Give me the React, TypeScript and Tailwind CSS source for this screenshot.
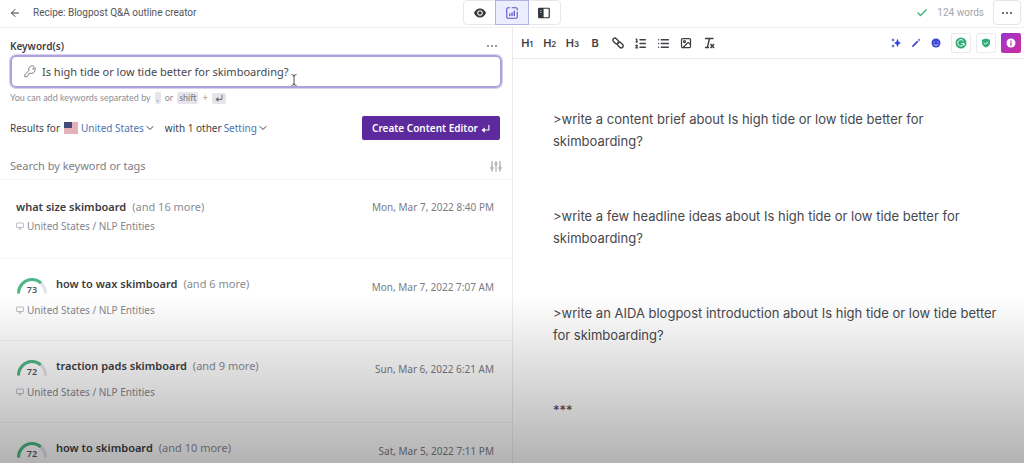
import { useState } from 'react';
import {
  ArrowLeft,
  Check,
  ChevronDown,
  Image,
  List,
  ListOrdered,
} from 'lucide-react';
import { clsx } from 'clsx';

interface Result {
  id: number;
  title: string;
  more: number;
  date: string;
  score?: number;
  source?: string;
}

const results: Result[] = [
  { id: 1, title: 'what size skimboard', more: 16, date: 'Mon, Mar 7, 2022 8:40 PM', source: 'United States / NLP Entities' },
  { id: 2, title: 'how to wax skimboard', more: 6, date: 'Mon, Mar 7, 2022 7:07 AM', score: 73, source: 'United States / NLP Entities' },
  { id: 3, title: 'traction pads skimboard', more: 9, date: 'Sun, Mar 6, 2022 6:21 AM', score: 72, source: 'United States / NLP Entities' },
  { id: 4, title: 'how to skimboard', more: 10, date: 'Sat, Mar 5, 2022 7:11 PM', score: 72 },
];

const paragraphs = [
  '>write a content brief about Is high tide or low tide better for skimboarding?',
  '>write a few headline ideas about Is high tide or low tide better for skimboarding?',
  '>write an AIDA blogpost introduction about Is high tide or low tide better for skimboarding?',
  '***',
];

function EyeIcon() {
  return (
    <svg className="w-3 h-3" viewBox="0 0 24 24" fill="none">
      <path d="M12 3C6.500 3 2 7 0 12c2 5 6.500 9 12 9s10-4 12-9c-2-5-6.500-9-12-9z" fill="currentColor" />
      <circle cx="12" cy="12" r="5.500" fill="white" />
      <circle cx="12" cy="12" r="3.500" fill="currentColor" />
    </svg>
  );
}

function ChartIcon() {
  return (
    <svg className="w-3 h-3" viewBox="0 0 24 24" fill="none" stroke="currentColor" strokeWidth="2.200" strokeLinecap="round">
      <path d="M7 1.500H4A2.500 2.500 0 0 0 1.500 4v16A2.500 2.500 0 0 0 4 22.500h16a2.500 2.500 0 0 0 2.500-2.500V10M12 1.500h8A2.500 2.500 0 0 1 22.500 4v2" />
      <path d="M7.500 17v-3M12 17v-5M16.500 17V8.500" strokeWidth="2.600" />
    </svg>
  );
}

function PanelIcon() {
  return (
    <svg className="w-3 h-3" viewBox="0 0 24 24" fill="none" stroke="currentColor" strokeWidth="2.400">
      <rect x="1.500" y="2.500" width="21" height="19" rx="1.500" />
      <path d="M2 3h8v18H2z" fill="currentColor" />
      <path d="M4 7h3M4 11h3" stroke="white" strokeWidth="1.200" />
    </svg>
  );
}

function KeyIcon() {
  return (
    <svg className="w-[13px] h-[13px] shrink-0 text-[#77777f]" viewBox="0 0 24 24" fill="none" stroke="currentColor" strokeWidth="1.800" strokeLinejoin="round">
      <path d="M15.500 1.500a7 7 0 0 0-6.700 9L1.500 18v3.500h3.800l2.300-2.100v-1.700l3.700-2.700A7 7 0 1 0 15.500 1.500z" />
      <circle cx="17" cy="7" r="1" />
    </svg>
  );
}

function ReturnIcon({ className }: { className: string }) {
  return (
    <svg className={className} viewBox="0 0 20 20" fill="none" stroke="currentColor" strokeWidth="2.400">
      <path d="M17.500 2v11.500H6" />
      <path d="M8.500 7.500L1 13.500l7.500 6z" fill="currentColor" stroke="none" />
    </svg>
  );
}

function FlagIcon() {
  return (
    <svg className="w-[14px] h-3" viewBox="0 0 14 12">
      <path d="M0 0h14v12H0z" fill="#f1dfe3" />
      <path d="M0 1h14M0 3h14M0 5h14M0 7h14M0 9h14M0 11h14" stroke="#d8818f" />
      <path d="M0 0h8v6H0z" fill="#414a78" />
    </svg>
  );
}

function LinkIcon() {
  return (
    <svg className="w-3 h-3" viewBox="0 0 24 24" fill="none" stroke="currentColor" strokeWidth="2.800">
      <rect x="1" y="4" width="13" height="8" rx="4" transform="rotate(45 7.500 8)" />
      <rect x="10" y="12" width="13" height="8" rx="4" transform="rotate(45 16.500 16)" />
    </svg>
  );
}

function ClearFormatIcon() {
  return (
    <svg className="w-3 h-3" viewBox="0 0 24 24" fill="none" stroke="currentColor" strokeWidth="2.800">
      <path d="M4 3h17M13 3L9 20M4 21h8" />
      <path d="M15 14l7 8M22 14l-7 8" strokeWidth="3.200" />
    </svg>
  );
}

function FilterIcon() {
  return (
    <svg className="w-3 h-3" viewBox="0 0 24 24" fill="none" stroke="currentColor" strokeWidth="2">
      <path d="M4 2v12M4 18v5M12 2v3M12 10v13M20 2v12M20 18v5" />
      <circle cx="4" cy="16" r="2.200" />
      <circle cx="12" cy="7.500" r="2.200" />
      <circle cx="20" cy="16" r="2.200" />
    </svg>
  );
}

function SparkleIcon() {
  return (
    <svg className="w-[10px] h-[10px]" viewBox="0 0 20 20" fill="currentColor">
      <path d="M13 1.500l2.500 6 4.500 2.500-4.500 2.500-2.500 6-2.500-6L6 10l4.500-2.500z" />
      <path d="M4 0l1.200 3L8 4 5.200 5.200 4 8 2.800 5.200 0 4l2.800-1zM4 12l1.200 3L8 16l-2.800 1.200L4 20l-1.200-2.800L0 16l2.800-1z" />
    </svg>
  );
}

function PencilIcon() {
  return (
    <svg className="w-[10px] h-[10px]" viewBox="0 0 20 20" fill="currentColor">
      <path d="M3 14.500L12.500 5l2.500 2.500L5.500 17 1.500 18.500zM14 3.500L16 1.500 18.500 4l-2 2z" />
    </svg>
  );
}

function SmileIcon() {
  return (
    <svg className="w-[10px] h-[10px]" viewBox="0 0 20 20">
      <circle cx="10" cy="10" r="9" fill="currentColor" />
      <path d="M5.500 8h2M12.500 8h2M5 12c2 3.500 8 3.500 10 0" stroke="white" strokeWidth="1.500" fill="none" />
    </svg>
  );
}

function GrammarIcon() {
  return (
    <svg className="w-3 h-3" viewBox="0 0 24 24" fill="none">
      <circle cx="12" cy="12" r="11" fill="#2fae78" />
      <path d="M17 8a6.300 6.300 0 1 0 1 5h-5M18 13v4" stroke="white" strokeWidth="2" />
    </svg>
  );
}

function ShieldIcon() {
  return (
    <svg className="w-[10px] h-[10px]" viewBox="0 0 20 20" fill="none">
      <path d="M10 1l8 2.500V10c0 4.500-3.500 7.500-8 9-4.500-1.500-8-4.500-8-9V3.500z" fill="#2fae78" />
      <path d="M6 9.500l3 3 5-5" stroke="white" strokeWidth="2" />
    </svg>
  );
}

function InfoIcon() {
  return (
    <svg className="w-[10px] h-[10px]" viewBox="0 0 20 20">
      <circle cx="10" cy="10" r="9" fill="white" />
      <path d="M10 9v6M10 5v2.500" stroke="#b62db5" strokeWidth="2.600" />
    </svg>
  );
}

function Dots({ className }: { className?: string }) {
  return (
    <svg className={clsx('w-3 h-1', className)} viewBox="0 0 12 4" fill="currentColor">
      <circle cx="2" cy="2" r="1" />
      <circle cx="6" cy="2" r="1" />
      <circle cx="10" cy="2" r="1" />
    </svg>
  );
}

function Gauge({ score }: { score: number }) {
  return (
    <div className="relative w-8 h-[18px] shrink-0">
      <svg className="w-8 h-[18px]" viewBox="0 0 32 18" fill="none" strokeWidth="3">
        <path d="M2.500 17.500a13.500 14 0 0 1 27 0" stroke="#e4e2e8" pathLength="100" />
        <path d="M2.500 17.500a13.500 14 0 0 1 27 0" stroke="#4db886" pathLength="100" strokeDasharray={`${score} 100`} />
      </svg>
      <span className="absolute inset-x-0 top-2 text-center text-[9px] leading-3 font-semibold text-[#55555b]">{score}</span>
    </div>
  );
}

function ResultRow({ result }: { result: Result }) {
  const scored = result.score !== undefined;

  return (
    <li className={clsx('border-t border-[#f5f5f7] pl-4 pr-[18px]', scored ? 'h-[82px] pt-[17px]' : 'h-[79px] pt-[19px]')}>
      <div className="flex items-start">
        {result.score !== undefined && (
          <div className="mr-2">
            <Gauge score={result.score} />
          </div>
        )}
        <h3 className="text-[11px] leading-4 font-semibold text-[#3c3c42]">{result.title}</h3>
        <span className="ml-[6px] text-[11px] leading-4 text-[#8b8b92]">(and {result.more} more)</span>
        <time className={clsx('ml-auto text-[10px] leading-4 text-[#7c7c83]', scored && 'pt-[3px]')}>{result.date}</time>
      </div>
      {result.source && (
        <p className={clsx('flex items-center gap-[3px] text-[10px] leading-4 text-[#85858c]', scored ? 'mt-[7px]' : 'mt-[3px]')}>
          <svg className="w-2 h-2" viewBox="0 0 16 16" fill="none" stroke="#a9a9b0" strokeWidth="1.500">
            <rect x="1" y="2" width="14" height="9" rx="1" />
            <path d="M5 14h6M8 11v3" />
          </svg>
          {result.source}
        </p>
      )}
    </li>
  );
}

export default function App() {
  const [view, setView] = useState('content');
  const [keywords, setKeywords] = useState('Is high tide or low tide better for skimboarding?');

  const views = [
    { id: 'preview', label: 'Preview', icon: <EyeIcon /> },
    { id: 'content', label: 'Content score', icon: <ChartIcon /> },
    { id: 'split', label: 'Side panel', icon: <PanelIcon /> },
  ];

  const formatTools = [
    { label: 'Heading 1', icon: <span>H<small className="text-[8px]">1</small></span> },
    { label: 'Heading 2', icon: <span>H<small className="text-[8px]">2</small></span> },
    { label: 'Heading 3', icon: <span>H<small className="text-[8px]">3</small></span> },
    { label: 'Bold', icon: <span>B</span> },
    { label: 'Link', icon: <LinkIcon /> },
    { label: 'Ordered list', icon: <ListOrdered className="w-[13px] h-[13px]" strokeWidth={2.5} /> },
    { label: 'Bullet list', icon: <List className="w-[13px] h-[13px]" strokeWidth={2.5} /> },
    { label: 'Image', icon: <Image className="w-3 h-3" strokeWidth={2.5} /> },
    { label: 'Clear formatting', icon: <ClearFormatIcon /> },
  ];

  return (
    <div className="relative h-screen flex flex-col overflow-hidden bg-white font-['Noto_Sans',sans-serif] text-[#3f3f46]">
      {/* Top bar */}
      <header className="h-7 shrink-0 grid grid-cols-[1fr_auto_1fr] items-start border-b border-[#efeff1]">
        <div className="h-[25px] flex items-center gap-3 pl-[9px]">
          <a href="#recipes" aria-label="Back">
            <ArrowLeft className="w-3 h-3" />
          </a>
          <h1 className="font-['Roboto',sans-serif] text-[10px] text-[#55555c]">Recipe: Blogpost Q&amp;A outline creator</h1>
        </div>
        <div className="flex h-[25px] rounded border border-[#e8e8ec]">
          {views.map((item) => (
            <button
              key={item.id}
              type="button"
              aria-label={item.label}
              onClick={() => setView(item.id)}
              className={clsx(
                'w-8 flex items-center justify-center',
                view === item.id ? 'bg-[#edeefd] text-[#5a52c8] outline outline-[#b0b2ea]' : 'text-[#34343b]',
              )}
            >
              {item.icon}
            </button>
          ))}
        </div>
        <div className="h-[25px] flex items-center justify-end gap-[9px] pr-[3px]">
          <Check className="w-3 h-3 text-[#3fb57f]" strokeWidth={3} />
          <span className="font-['Roboto',sans-serif] text-[10px] text-[#a5a5ac]">124 words</span>
          <button type="button" aria-label="More options" className="w-7 h-[25px] flex items-center justify-center rounded border border-[#e4e4e9]">
            <Dots />
          </button>
        </div>
      </header>

      <main className="flex-1 min-h-0 grid grid-cols-2">
        {/* Keyword research */}
        <section className="min-w-0">
          <div className="px-[10px] pt-[10px]">
            <div className="flex items-center justify-between mb-px">
              <label htmlFor="keywords" className="text-[10px] leading-4 font-semibold">Keyword(s)</label>
              <button type="button" aria-label="Keyword options" className="pr-1">
                <Dots className="text-[#77777e]" />
              </button>
            </div>
            <div className="relative h-[33px] flex items-center gap-[5px] rounded-md border-2 border-[#afa1dc] pl-3 shadow-[0_0_0_1px_#d9d2ef]">
              <KeyIcon />
              <input
                id="keywords"
                type="text"
                value={keywords}
                onChange={(e) => setKeywords(e.target.value)}
                className="flex-1 min-w-0 bg-transparent text-[11px] leading-4 text-[#46464d] outline-none"
              />
              {/* Text cursor */}
              <svg className="absolute left-[279px] top-[17px] w-[6px] h-3" viewBox="0 0 6 12" fill="none" stroke="#55555b">
                <path d="M0.500 0.500Q3 0.500 3 2.500Q3 0.500 5.500 0.500M3 2v8M0.500 11.500Q3 11.500 3 9.500Q3 11.500 5.500 11.500" />
              </svg>
            </div>
            <p className="mt-1 flex items-center gap-1 font-['Lato',sans-serif] text-[9px] leading-3 text-[#8e8e95]">
              You can add keywords separated by
              <kbd className="px-[2px] rounded-xs bg-[#e6e5ec] font-['Lato',sans-serif]">,</kbd>
              or
              <kbd className="px-[2px] rounded-xs bg-[#e6e5ec] font-['Lato',sans-serif] text-[#77777e]">shift</kbd>
              +
              <kbd className="h-[11px] px-[3px] flex items-center rounded-xs bg-[#e6e5ec] text-[#66666d]">
                <ReturnIcon className="w-2 h-2" />
              </kbd>
            </p>
            <div className="mt-3 flex items-center text-[10px] leading-4">
              <span className="mr-1">Results for</span>
              <FlagIcon />
              <label className="ml-[3px] flex items-center text-[#4d74b5]">
                <select aria-label="Country" className="appearance-none field-sizing-content bg-transparent outline-none">
                  <option>United States</option>
                </select>
                <ChevronDown className="w-3 h-3 text-[#3f3f46]" />
              </label>
              <span className="ml-[9px] mr-[2px]">with 1 other</span>
              <label className="flex items-center text-[#4d74b5]">
                <select aria-label="Setting" className="appearance-none field-sizing-content bg-transparent outline-none">
                  <option>Setting</option>
                </select>
                <ChevronDown className="w-3 h-3 text-[#3f3f46]" />
              </label>
              <button type="button" className="ml-auto mr-[2px] w-[138px] h-6 flex items-center justify-center gap-[3px] rounded-xs bg-[#5c2a9d] text-[10px] font-semibold text-white">
                Create Content Editor
                <ReturnIcon className="w-[9px] h-[9px]" />
              </button>
            </div>
          </div>

          <div className="mt-[13px] h-[26px] flex items-center justify-between px-[10px]">
            <input
              type="search"
              aria-label="Search by keyword or tags"
              placeholder="Search by keyword or tags"
              className="flex-1 min-w-0 bg-transparent text-[11px] leading-4 placeholder:text-[#7d7d84] outline-none"
            />
            <button type="button" aria-label="Filter results" className="text-[#97979e]">
              <FilterIcon />
            </button>
          </div>

          <ul>
            {results.map((result) => (
              <ResultRow key={result.id} result={result} />
            ))}
          </ul>
        </section>

        {/* Editor */}
        <section className="min-w-0 border-l border-[#ebebee]">
          <div className="h-[31px] flex items-center justify-between border-b border-[#ebebed] px-[3px]">
            <div className="w-[204px] flex justify-between">
              {formatTools.map((tool) => (
                <button
                  key={tool.label}
                  type="button"
                  aria-label={tool.label}
                  className="w-[22px] h-5 flex items-center justify-center font-['Inter',sans-serif] text-[11px] font-semibold"
                >
                  {tool.icon}
                </button>
              ))}
            </div>
            <div className="flex items-center gap-[5px]">
              <div className="mr-[5px] flex items-center gap-[10px] text-[#3a46d6]">
                <button type="button" aria-label="Compose"><SparkleIcon /></button>
                <button type="button" aria-label="Edit"><PencilIcon /></button>
                <button type="button" aria-label="Tone"><SmileIcon /></button>
              </div>
              <button type="button" aria-label="Grammar check" className="w-5 h-5 flex items-center justify-center rounded-xs border border-[#ebebef]"><GrammarIcon /></button>
              <button type="button" aria-label="Plagiarism check" className="w-5 h-5 flex items-center justify-center rounded-xs border border-[#ebebef]"><ShieldIcon /></button>
              <button type="button" aria-label="Info" className="w-5 h-5 flex items-center justify-center rounded-xs bg-linear-to-br from-[#9a2fd0] to-[#cf2b9b]"><InfoIcon /></button>
            </div>
          </div>
          <article className="flex flex-col gap-[53px] pl-10 pr-6 pt-[49px] font-['Inter',sans-serif] text-[13px] leading-[22px] text-[#47474c]">
            {paragraphs.map((text) => (
              <p key={text}>{text}</p>
            ))}
          </article>
        </section>
      </main>

      {/* Bottom shade */}
      <div className="pointer-events-none absolute inset-x-0 bottom-0 h-[36%] bg-linear-to-b from-black/0 to-black/30" />
    </div>
  );
}
